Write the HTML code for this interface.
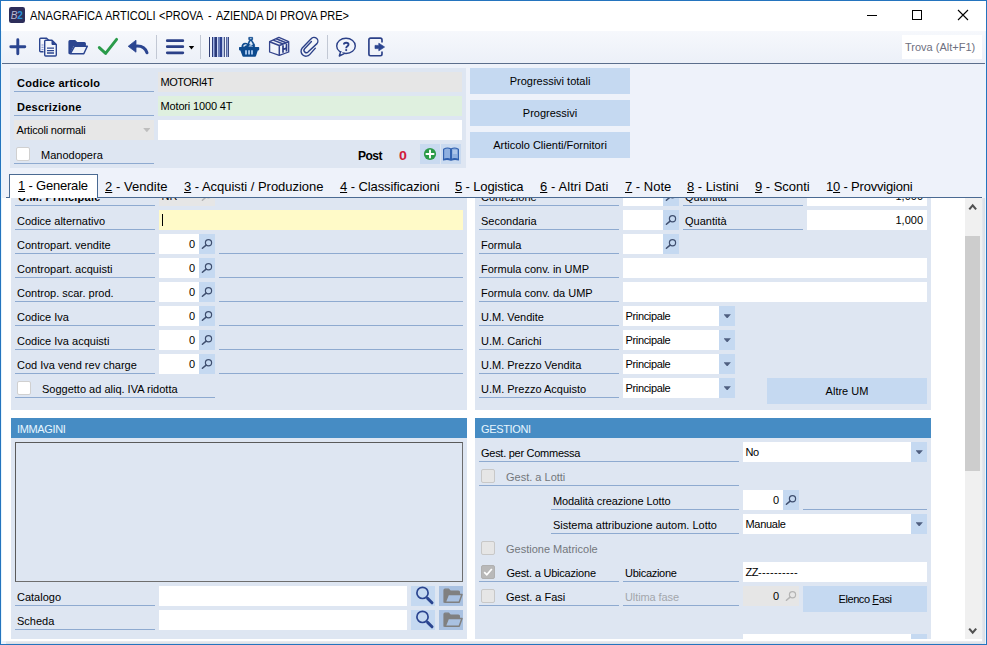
<!DOCTYPE html>
<html>
<head>
<meta charset="utf-8">
<title>ANAGRAFICA ARTICOLI</title>
<style>
*{box-sizing:border-box;margin:0;padding:0}
html,body{width:987px;height:645px;overflow:hidden;background:#fff}
body{font-family:"Liberation Sans",sans-serif;font-size:11px;color:#000;position:relative}
.a{position:absolute}
#win{position:absolute;left:0;top:0;width:987px;height:645px;background:#EEF2FA;overflow:hidden}
.wb{position:absolute;background:#2474BE;z-index:50}
#title{position:absolute;left:0;top:0;width:987px;height:31px;background:#fff}
#title .t{position:absolute;left:0;top:9px;font-size:12px;line-height:14px;white-space:nowrap;color:#000}
#title .t span{position:absolute;top:0;transform-origin:0 0;white-space:nowrap}
#tb{position:absolute;left:0;top:31px;width:987px;height:32px;background:linear-gradient(#F6F8FC,#ECF0F8)}
#tbl{position:absolute;left:0;top:63px;width:987px;height:1px;background:#5B6E8C}
.lbl{position:absolute;height:20px;line-height:22px;white-space:nowrap;padding-left:2px;border-bottom:1px solid #8EAAD0}
.lbl.b{font-weight:bold;letter-spacing:0.25px;padding-left:3px}
.fld{position:absolute;height:20px;line-height:20px;background:#fff;white-space:nowrap;padding:0 3px 0 2.5px}
.num{text-align:right;padding-right:4px}
.ln{position:absolute;height:1px;background:#8EAAD0}
.btn{position:absolute;background:#C5D9F1;text-align:center;white-space:nowrap}
.pan{position:absolute;background:#DEE6F2}
.hdr{position:absolute;height:20px;line-height:22px;background:#468CC4;color:#E6F6FF;padding-left:6px;letter-spacing:-0.35px}
.sb{position:absolute;width:16px;height:20px;background:#C5D9F1}
.cb{position:absolute;width:14px;height:14px;background:#fff;border:1px solid #D0D0D0;border-radius:2px}
.cb.d{background:#E6E6E6;border-color:#C8C8C8}
.dd{position:absolute;width:16px;height:20px;background:#C5D9F1}
.dd:after{content:"";position:absolute;left:4.5px;top:8.2px;width:7.4px;height:4.2px;background:#4F5F80;clip-path:polygon(0 0,100% 0,50% 100%)}
.cmb{letter-spacing:-0.35px}
.gray{color:#73777C}
.mg{position:absolute;left:0;top:0;width:16px;height:20px}
.tab{position:absolute;top:175px;height:24px;line-height:24px;font-size:13px;white-space:nowrap}
.tab u{text-decoration:underline}
</style>
</head>
<body>
<div id="win">
<svg width="0" height="0" style="position:absolute"><defs>
<g id="mg"><circle cx="9.5" cy="8.7" r="3.1" fill="none" stroke="#3F4F6F" stroke-width="1.2"/><path d="M7.1 11.1 L3.4 14.3" stroke="#3F4F6F" stroke-width="1.5" stroke-linecap="round"/></g>
<g id="mgg"><circle cx="9.5" cy="8.7" r="3.1" fill="none" stroke="#B4B4B4" stroke-width="1.2"/><path d="M7.1 11.1 L3.4 14.3" stroke="#B4B4B4" stroke-width="1.5" stroke-linecap="round"/></g>
<g id="bigmg"><circle cx="11.5" cy="6.9" r="5.6" fill="none" stroke="#2B4590" stroke-width="1.7"/><path d="M16.6 12.4 L21 16.8" stroke="#2B4590" stroke-width="3" stroke-linecap="round"/></g>
<g id="gfold"><path d="M5 16.2 V4.2 Q5 3.2 6 3.2 H9.6 L11.2 5 H19.4 Q20.4 5 20.4 6 V9 H9 L6 16.2 Z" fill="#808080" stroke="#808080" stroke-width="1.2" stroke-linejoin="round"/><path d="M6.2 16.2 L9.2 8.6 H23 L20.2 16.2 Z" fill="#A9C1E1" stroke="#808080" stroke-width="1.5" stroke-linejoin="round"/></g>
</defs></svg>
<div class="wb" style="left:0;top:0;width:987px;height:1px"></div><div class="wb" style="left:0;top:644px;width:987px;height:1px"></div><div class="wb" style="left:0;top:0;width:1px;height:645px"></div><div class="wb" style="left:986px;top:0;width:1px;height:645px"></div>
<div id="title"><div class="t"><span style="left:29.8px;transform:scaleX(0.93)">ANAGRAFICA</span><span style="left:104.8px;transform:scaleX(0.915)">ARTICOLI</span><span style="left:159.2px;transform:scaleX(0.915)">&lt;PROVA</span><span style="left:208.2px;transform:scaleX(0.915)">-</span><span style="left:215.5px;transform:scaleX(0.915)">AZIENDA</span><span style="left:266.1px;transform:scaleX(0.915)">DI</span><span style="left:280.0px;transform:scaleX(0.915)">PROVA</span><span style="left:319.9px;transform:scaleX(0.915)">PRE&gt;</span></div></div>
<div id="tb"></div>
<div id="tbl"></div>
<!--TOOLBAR-->
<svg class="a" style="left:0;top:0" width="987" height="64" viewBox="0 0 987 64">
<!-- title icon -->
<rect x="9" y="7" width="16" height="16" rx="2.2" fill="#2D2E5A"/>
<text x="10.8" y="18.7" font-family="Liberation Sans" font-size="10" font-style="italic" fill="#B9B9D2">B</text>
<text x="17.2" y="18.7" font-family="Liberation Sans" font-size="10" font-weight="bold" fill="#2A93D8">2</text>
<!-- window controls -->
<path d="M867 15.5 H877" stroke="#000" stroke-width="1"/>
<rect x="912.5" y="10.5" width="9" height="9" fill="none" stroke="#000" stroke-width="1"/>
<path d="M958 10 L968 20 M968 10 L958 20" stroke="#000" stroke-width="1.1"/>
<!-- plus -->
<path d="M10.8 46.7 H24.8 M17.8 39.7 V53.7" stroke="#2B4590" stroke-width="2.9" stroke-linecap="round"/>
<!-- copy -->
<path d="M43.5 51.8 H40.7 Q39.7 51.8 39.7 50.8 V39.2 Q39.7 38.2 40.7 38.2 H46.5 L49.8 41.2" fill="none" stroke="#2B4590" stroke-width="1.4"/>
<path d="M44.7 41.2 Q44.7 40.2 45.7 40.2 H52 L56.3 44.5 V55 Q56.3 56 55.3 56 H45.7 Q44.7 56 44.7 55 Z" fill="#F3F6FB" stroke="#2B4590" stroke-width="1.4" stroke-linejoin="round"/>
<path d="M52 40.4 V44.5 H56" fill="#2B4590" stroke="#2B4590" stroke-width="1"/>
<path d="M47 48.2 H54 M47 50.6 H54 M47 53 H54" stroke="#2B4590" stroke-width="1.3"/>
<path d="M41.5 45 H43.5 M41.5 47.3 H43.5 M41.5 49.6 H43.5" stroke="#7C8FCB" stroke-width="1"/>
<!-- folder -->
<path d="M69 53.3 V41.6 Q69 40.6 70 40.6 H75 L77 42.6 H84.3 Q85.3 42.6 85.3 43.6 V45.6 H73.2 L69.6 53.6 Z" fill="#2B4590" stroke="#2B4590" stroke-width="1.2" stroke-linejoin="round"/>
<path d="M70.4 53.7 L74.6 46.2 H87.3 L83.8 53.7 Z" fill="#EEF2FA" stroke="#2B4590" stroke-width="1.5" stroke-linejoin="round"/>
<!-- check -->
<path d="M99.3 47.6 L105.6 53.4 L116.6 39.4" fill="none" stroke="#2A9B4A" stroke-width="2.9" stroke-linecap="round" stroke-linejoin="round"/>
<!-- undo -->
<path d="M128.2 46.3 L136 40.2 V52.2 Z" fill="#2B4590" stroke="#2B4590" stroke-width="0.8" stroke-linejoin="round"/>
<path d="M135 46.2 Q144.5 45 147 52.8" fill="none" stroke="#2B4590" stroke-width="3" stroke-linecap="round"/>
<!-- sep -->
<path d="M156.5 35 V59 M200.5 35 V59 M327.5 35 V59" stroke="#C2C8D4" stroke-width="1"/>
<!-- hamburger -->
<path d="M167.3 40.7 H182.8 M167.3 46.7 H182.8 M167.3 52.8 H182.8" stroke="#2B4088" stroke-width="2.8" stroke-linecap="round"/>
<path d="M188.8 46 H194.2 L191.5 49.4 Z" fill="#000"/>
<!-- barcode -->
<g shape-rendering="crispEdges">
<rect x="209" y="37" width="1" height="20" fill="#2E3C72"/><rect x="212" y="37" width="1" height="20" fill="#2B3A78"/><rect x="213" y="37" width="1" height="20" fill="#A0B4E8"/><rect x="214" y="37" width="1" height="20" fill="#6070A8"/><rect x="215" y="37" width="2" height="20" fill="#2B3A78"/><rect x="217" y="37" width="1" height="20" fill="#D0DCF8"/><rect x="218" y="37" width="2" height="20" fill="#6A7DB8"/><rect x="220" y="37" width="2" height="20" fill="#2B4090"/><rect x="222" y="37" width="2" height="20" fill="#B8C4E4"/><rect x="224" y="37" width="1" height="20" fill="#4A5888"/><rect x="226" y="37" width="1" height="20" fill="#5A6AA0"/><rect x="227" y="37" width="1" height="20" fill="#98A8D8"/><rect x="228" y="37" width="1" height="20" fill="#3A4880"/>
</g>
<!-- basket -->
<g>
<path d="M247.4 47 V44.6 L249.4 40.4 V39.6 H248.8 V37.4 H252.6 V39.6 H252 V40.4 L254.6 44.8 V47 Z" fill="#0D4A8E" stroke="#0D4A8E" stroke-width="0.8" stroke-linejoin="round"/>
<path d="M249.2 44 L250.2 41.2 H251.2 L253 44.6 Q251 45.4 249.2 44 Z" fill="#DCE8F7"/><path d="M249.8 38.3 H251.6 V39.2 H249.8 Z" fill="#DCE8F7"/>
<path d="M241.4 47.2 Q241.6 43 245.2 42.8 Q248.8 43 249 47.2 Z" fill="#0D4A8E"/>
<path d="M243 46.4 Q243.4 44.4 245.4 44.2 Q246.6 44.2 247.2 45 Q245.4 45.2 244.6 46.4 Z" fill="#DCE8F7"/>
<path d="M248.4 46.6 Q249.8 44.8 251.6 45.6 Q252.8 46 253.2 46.6 Z" fill="#DCE8F7"/>
<path d="M239.6 47.1 H258.6 Q259.2 47.1 259.2 47.8 V49.6 Q259.2 50.4 258.4 50.4 H257.8 L256 56 Q255.8 56.8 255 56.8 H243.4 Q242.6 56.8 242.4 56 L240.4 50.4 H239.8 Q239 50.4 239 49.6 V47.8 Q239 47.1 239.6 47.1 Z" fill="#0D4A8E"/>
<path d="M246 50.2 V54.6 M249.05 50.2 V54.6 M252 50.2 V54.6" stroke="#B8D4F8" stroke-width="1.7"/>
</g>
<!-- box -->
<g fill="none" stroke="#34448C" stroke-width="1.3" stroke-linejoin="round">
<path d="M269.6 41.7 L278.9 37.4 L288.7 41.7 V52 L279.3 55.4 L269.6 52 Z"/>
<path d="M269.6 41.7 L279.3 45.5 L288.7 41.7 M279.3 45.5 V55.4" stroke-width="1.5"/>
<path d="M273.2 40.1 L283.2 44 M276.2 38.7 L286 42.8" stroke-width="1.5"/>
<path d="M283 45.2 V52.8 M286.5 43.8 V51.4 M283 49.5 L286.5 48.1" stroke="#2B3C86" stroke-width="1.7"/>
</g>
<!-- paperclip -->
<path transform="matrix(0.643 -0.766 0.766 0.643 310 46)" d="M4.4 -1.8 L-5.6 -2.4 A2.4 2.4 0 0 0 -5.6 2.4 L6.3 3.8 A3.8 3.8 0 0 0 6.3 -3.8 L-6.5 -4.7 A5 5 0 0 0 -6.5 5.3 L1.8 5.5" fill="none" stroke="#2B4088" stroke-width="1.4" stroke-linecap="round" stroke-linejoin="round"/>
<!-- help -->
<ellipse cx="346" cy="45.9" rx="9.3" ry="7.6" fill="none" stroke="#2B4088" stroke-width="1.4"/>
<path d="M340.6 51.6 L339.3 56 L344.2 53.6" fill="#EEF2F9" stroke="#2B4088" stroke-width="1.4" stroke-linejoin="round" stroke-linecap="round"/>
<path d="M343.9 44.5 Q343.9 42.7 346.2 42.7 Q348.5 42.7 348.5 44.5 Q348.5 45.6 347.3 46.3 Q346.2 47 346.2 48.2" fill="none" stroke="#2B4088" stroke-width="1.9" stroke-linecap="butt"/>
<circle cx="346.2" cy="50.1" r="1.05" fill="#2B4088"/>
<!-- exit -->
<path d="M382 42.4 V39.8 Q382 38.1 380.3 38.1 H370.6 Q368.9 38.1 368.9 39.8 V54 Q368.9 55.7 370.6 55.7 H380.3 Q382 55.7 382 54 V51.4" fill="none" stroke="#2B4088" stroke-width="1.65" stroke-linejoin="round"/>
<path d="M375 45.4 H378.8 V43.2 L384.6 47 L378.8 50.8 V48.6 H375 Z" fill="#2B4590" stroke="#2B4590" stroke-width="0.7" stroke-linejoin="round"/>
</svg>
<div class="a" style="left:902px;top:35px;width:80px;height:24px;background:#fff;color:#6E7080;line-height:24px;padding-left:3px;white-space:nowrap">Trova (Alt+F1)</div>
<!--HEADER-->
<div class="pan" style="left:10px;top:68px;width:456px;height:100px"></div>
<div class="lbl b" style="left:14px;top:72px;width:140px">Codice articolo</div>
<div class="fld" style="left:158px;top:72px;width:304px;background:#E6E6E6;letter-spacing:-0.5px">MOTORI4T</div>
<div class="lbl b" style="left:14px;top:96px;width:140px">Descrizione</div>
<div class="fld" style="left:158px;top:96px;width:304px;background:#DFF0DF;letter-spacing:-0.15px">Motori 1000 4T</div>
<div class="fld" style="left:14px;top:120px;width:140px;background:#E7E7E7;letter-spacing:-0.2px">Articoli normali</div>
<div class="a" style="left:143.2px;top:127.9px;width:7.3px;height:4.3px;background:#BEBEBE;clip-path:polygon(0 0,100% 0,50% 100%)"></div>
<div class="fld" style="left:158px;top:120px;width:304px"></div>
<div class="cb" style="left:16px;top:147px"></div>
<div class="lbl" style="left:14px;top:144px;width:140px;padding-left:27px">Manodopera</div>
<div class="a" style="left:358px;top:149px;font-weight:bold;font-size:12px;line-height:14px;letter-spacing:-0.5px">Post</div>
<div class="a" style="left:399px;top:149px;font-weight:bold;font-size:12px;line-height:14px;color:#D01A3C;transform:scaleX(1.18);transform-origin:0 0">0</div>
<div class="a" style="left:420px;top:144px;width:20px;height:20px;background:#C9DAF0"></div>
<div class="a" style="left:441px;top:144px;width:20px;height:20px;background:#C9DAF0"></div>
<svg class="a" style="left:420px;top:144px" width="42" height="20" viewBox="420 144 42 20">
<circle cx="430" cy="154" r="6.1" fill="#2A9A48"/>
<path d="M426.4 154 H433.6 M430 150.4 V157.6" stroke="#fff" stroke-width="1.9" stroke-linecap="round"/>
<path d="M443.6 149.2 Q447.4 147 450.6 148.8 V159.4 Q447.4 157.8 443.6 159.6 Z M458.4 149.2 Q454.6 147 451.4 148.8 V159.4 Q454.6 157.8 458.4 159.6 Z" fill="#8FB0E0" stroke="#2F5FAE" stroke-width="1.1" stroke-linejoin="round"/>
<path d="M443 160 Q447.4 158.6 451 160.2 Q454.6 158.6 459 160" fill="none" stroke="#2F5FAE" stroke-width="1.2"/>
<path d="M452.8 151 H457 M452.8 153 H457" stroke="#D4E2F5" stroke-width="0.9"/>
</svg>
<div class="btn" style="left:470px;top:68px;width:160px;height:26px;line-height:27px">Progressivi totali</div>
<div class="btn" style="left:470px;top:100px;width:160px;height:26px;line-height:27px">Progressivi</div>
<div class="btn" style="left:470px;top:132px;width:160px;height:26px;line-height:27px">Articolo Clienti/Fornitori</div>
<!--TABS-->
<div class="a" style="left:1px;top:198px;width:981px;height:443px;background:#fff"></div>
<div class="a" style="left:6px;top:197px;width:976px;height:1px;background:#4A6A92"></div>
<div class="a" style="left:982px;top:198px;width:3px;height:446px;background:linear-gradient(90deg,#E6E9EE,#D8DCE4)"></div><div class="a" style="left:985px;top:31px;width:1px;height:613px;background:#EAF5FD;z-index:40"></div><div class="a" style="left:1px;top:31px;width:1px;height:613px;background:#E6F5FD;z-index:40"></div>
<div class="a" style="left:6px;top:641px;width:976px;height:3px;background:linear-gradient(#ECEEF2,#D8DCE4)"></div>
<div class="a" style="left:9px;top:174px;width:89px;height:24px;background:#fff;border:1px solid #4A6A92;border-bottom:0"></div>
<div class="tab" style="top:174px;left:18px;letter-spacing:-0.2px"><u>1</u> - Generale</div>
<div class="tab" style="left:105px;letter-spacing:0.04px"><u>2</u> - Vendite</div>
<div class="tab" style="left:184px;letter-spacing:-0.03px"><u>3</u> - Acquisti / Produzione</div>
<div class="tab" style="left:340px;letter-spacing:-0.09px"><u>4</u> - Classificazioni</div>
<div class="tab" style="left:455px;letter-spacing:-0.13px"><u>5</u> - Logistica</div>
<div class="tab" style="left:540px;letter-spacing:0.09px"><u>6</u> - Altri Dati</div>
<div class="tab" style="left:625px;letter-spacing:0px"><u>7</u> - Note</div>
<div class="tab" style="left:687px;letter-spacing:-0.04px"><u>8</u> - Listini</div>
<div class="tab" style="left:755px;letter-spacing:-0.02px"><u>9</u> - Sconti</div>
<div class="tab" style="left:826px;letter-spacing:-0.19px">1<u>0</u> - Provvigioni</div>
<!--PAGE-->
<div id="pg" class="a" style="left:0;top:0;width:987px;height:645px;clip-path:inset(198px 23px 6px 7px)">
<div class="pan" style="left:11px;top:180px;width:456px;height:230px"></div>
<div class="lbl b" style="left:15px;top:186px;width:140px">U.M. Principale</div>
<div class="fld" style="left:159px;top:186px;width:56px;background:#E6E6E6">NR</div>
<div class="sb" style="left:199px;top:186px;background:#E6E6E6"><svg class="mg" viewBox="0 0 16 20"><use href="#mgg"/></svg></div>
<div class="lbl" style="left:15px;top:210px;width:140px">Codice alternativo</div>
<div class="fld" style="left:159px;top:210px;width:304px;background:#FFFAC8"></div>
<div class="a" style="left:162px;top:214px;width:1px;height:12px;background:#000"></div>
<div class="lbl" style="left:15px;top:234px;width:140px">Contropart. vendite</div>
<div class="fld num" style="left:159px;top:234px;width:40px">0</div>
<div class="sb" style="left:199px;top:234px"><svg class="mg" viewBox="0 0 16 20"><use href="#mg"/></svg></div>
<div class="ln" style="left:219px;top:253px;width:244px"></div>
<div class="lbl" style="left:15px;top:258px;width:140px">Contropart. acquisti</div>
<div class="fld num" style="left:159px;top:258px;width:40px">0</div>
<div class="sb" style="left:199px;top:258px"><svg class="mg" viewBox="0 0 16 20"><use href="#mg"/></svg></div>
<div class="ln" style="left:219px;top:277px;width:244px"></div>
<div class="lbl" style="left:15px;top:282px;width:140px">Controp. scar. prod.</div>
<div class="fld num" style="left:159px;top:282px;width:40px">0</div>
<div class="sb" style="left:199px;top:282px"><svg class="mg" viewBox="0 0 16 20"><use href="#mg"/></svg></div>
<div class="ln" style="left:219px;top:301px;width:244px"></div>
<div class="lbl" style="left:15px;top:306px;width:140px">Codice Iva</div>
<div class="fld num" style="left:159px;top:306px;width:40px">0</div>
<div class="sb" style="left:199px;top:306px"><svg class="mg" viewBox="0 0 16 20"><use href="#mg"/></svg></div>
<div class="ln" style="left:219px;top:325px;width:244px"></div>
<div class="lbl" style="left:15px;top:330px;width:140px">Codice Iva acquisti</div>
<div class="fld num" style="left:159px;top:330px;width:40px">0</div>
<div class="sb" style="left:199px;top:330px"><svg class="mg" viewBox="0 0 16 20"><use href="#mg"/></svg></div>
<div class="ln" style="left:219px;top:349px;width:244px"></div>
<div class="lbl" style="left:15px;top:354px;width:140px">Cod Iva vend rev charge</div>
<div class="fld num" style="left:159px;top:354px;width:40px">0</div>
<div class="sb" style="left:199px;top:354px"><svg class="mg" viewBox="0 0 16 20"><use href="#mg"/></svg></div>
<div class="ln" style="left:219px;top:373px;width:244px"></div>
<div class="cb" style="left:17px;top:381px"></div>
<div class="lbl" style="left:15px;top:378px;width:200px;padding-left:27px">Soggetto ad aliq. IVA ridotta</div>
<div class="pan" style="left:475px;top:180px;width:456px;height:230px"></div>
<div class="lbl" style="left:479px;top:186px;width:140px">Confezione</div>
<div class="fld" style="left:623px;top:186px;width:40px"></div>
<div class="sb" style="left:663px;top:186px"><svg class="mg" viewBox="0 0 16 20"><use href="#mg"/></svg></div>
<div class="lbl" style="left:683px;top:186px;width:120px">Quantità</div>
<div class="fld num" style="left:807px;top:186px;width:120px">1,000</div>
<div class="lbl" style="left:479px;top:210px;width:140px">Secondaria</div>
<div class="fld" style="left:623px;top:210px;width:40px"></div>
<div class="sb" style="left:663px;top:210px"><svg class="mg" viewBox="0 0 16 20"><use href="#mg"/></svg></div>
<div class="lbl" style="left:683px;top:210px;width:120px">Quantità</div>
<div class="fld num" style="left:807px;top:210px;width:120px">1,000</div>
<div class="lbl" style="left:479px;top:234px;width:140px">Formula</div>
<div class="fld" style="left:623px;top:234px;width:40px"></div>
<div class="sb" style="left:663px;top:234px"><svg class="mg" viewBox="0 0 16 20"><use href="#mg"/></svg></div>
<div class="lbl" style="left:479px;top:258px;width:140px">Formula conv. in UMP</div>
<div class="fld" style="left:623px;top:258px;width:304px"></div>
<div class="lbl" style="left:479px;top:282px;width:140px">Formula conv. da UMP</div>
<div class="fld" style="left:623px;top:282px;width:304px"></div>
<div class="lbl" style="left:479px;top:306px;width:140px">U.M. Vendite</div>
<div class="fld" style="left:623px;top:306px;width:96px"><span class="cmb">Principale</span></div>
<div class="dd" style="left:719px;top:306px"></div>
<div class="lbl" style="left:479px;top:330px;width:140px">U.M. Carichi</div>
<div class="fld" style="left:623px;top:330px;width:96px"><span class="cmb">Principale</span></div>
<div class="dd" style="left:719px;top:330px"></div>
<div class="lbl" style="left:479px;top:354px;width:140px">U.M. Prezzo Vendita</div>
<div class="fld" style="left:623px;top:354px;width:96px"><span class="cmb">Principale</span></div>
<div class="dd" style="left:719px;top:354px"></div>
<div class="lbl" style="left:479px;top:378px;width:140px">U.M. Prezzo Acquisto</div>
<div class="fld" style="left:623px;top:378px;width:96px"><span class="cmb">Principale</span></div>
<div class="dd" style="left:719px;top:378px"></div>
<div class="btn" style="left:767px;top:378px;width:160px;height:26px;line-height:27px">Altre UM</div>
<div class="pan" style="left:11px;top:418px;width:456px;height:230px"></div>
<div class="hdr" style="left:11px;top:418px;width:456px">IMMAGINI</div>
<div class="a" style="left:15px;top:442px;width:448px;height:140px;border:1px solid #5A5A5A;border-right-color:#6E6E6E;border-bottom-color:#6E6E6E"></div>
<div class="lbl" style="left:15px;top:586px;width:140px">Catalogo</div>
<div class="fld" style="left:159px;top:586px;width:248px"></div>
<div class="a" style="left:411px;top:586px;width:24px;height:20px;background:#C5D9F1"><svg class="a" style="left:0;top:0" width="24" height="20" viewBox="0 0 24 20"><use href="#bigmg"/></svg></div>
<div class="a" style="left:439px;top:586px;width:24px;height:20px;background:#A9C1E1"><svg class="a" style="left:0;top:0" width="24" height="20" viewBox="0 0 24 20"><use href="#gfold"/></svg></div>
<div class="lbl" style="left:15px;top:610px;width:140px">Scheda</div>
<div class="fld" style="left:159px;top:610px;width:248px"></div>
<div class="a" style="left:411px;top:610px;width:24px;height:20px;background:#C5D9F1"><svg class="a" style="left:0;top:0" width="24" height="20" viewBox="0 0 24 20"><use href="#bigmg"/></svg></div>
<div class="a" style="left:439px;top:610px;width:24px;height:20px;background:#A9C1E1"><svg class="a" style="left:0;top:0" width="24" height="20" viewBox="0 0 24 20"><use href="#gfold"/></svg></div>
<div class="pan" style="left:475px;top:418px;width:456px;height:230px"></div>
<div class="hdr" style="left:475px;top:418px;width:456px">GESTIONI</div>
<div class="lbl" style="left:479px;top:442px;width:260px;letter-spacing:-0.27px">Gest. per Commessa</div>
<div class="fld" style="left:743px;top:442px;width:168px"><span style="letter-spacing:-0.5px">No</span></div>
<div class="dd" style="left:911px;top:442px"></div>
<div class="cb d" style="left:481px;top:469px"></div>
<div class="lbl gray" style="left:479px;top:466px;width:260px;padding-left:27px">Gest. a Lotti</div>
<div class="lbl" style="left:551px;top:490px;width:188px;letter-spacing:-0.1px">Modalità creazione Lotto</div>
<div class="fld num" style="left:743px;top:490px;width:40px">0</div>
<div class="sb" style="left:783px;top:490px"><svg class="mg" viewBox="0 0 16 20"><use href="#mg"/></svg></div>
<div class="ln" style="left:803px;top:509px;width:124px"></div>
<div class="lbl" style="left:551px;top:514px;width:188px">Sistema attribuzione autom. Lotto</div>
<div class="fld" style="left:743px;top:514px;width:168px"><span style="letter-spacing:-0.3px">Manuale</span></div>
<div class="dd" style="left:911px;top:514px"></div>
<div class="cb d" style="left:481px;top:541px"></div>
<div class="lbl gray" style="left:479px;top:538px;width:260px;padding-left:27px;border-bottom-color:transparent">Gestione Matricole</div>
<div class="cb d" style="left:481px;top:565px;background:#B9B9B9;border-color:#B0B0B0"><svg class="a" style="left:0;top:0" width="12" height="12" viewBox="0 0 12 12"><path d="M2.2 6.2 L4.8 8.8 L9.8 3" stroke="#fff" stroke-width="1.8" fill="none"/></svg></div>
<div class="lbl" style="left:479px;top:562px;width:140px;padding-left:27.5px;letter-spacing:-0.2px">Gest. a Ubicazione</div>
<div class="lbl" style="left:623px;top:562px;width:116px;letter-spacing:-0.28px">Ubicazione</div>
<div class="fld" style="left:743px;top:562px;width:184px"><span style="letter-spacing:-0.5px">ZZ</span><span style="letter-spacing:0.35px">----------</span></div>
<div class="cb d" style="left:481px;top:589px"></div>
<div class="lbl" style="left:479px;top:586px;width:140px;padding-left:27px">Gest. a Fasi</div>
<div class="lbl" style="left:623px;top:586px;width:116px;color:#A3A7AC;letter-spacing:-0.1px">Ultima fase</div>
<div class="fld num" style="left:743px;top:586px;width:40px;background:#E6E6E6">0</div>
<div class="sb" style="left:783px;top:586px;background:#E6E6E6"><svg class="mg" viewBox="0 0 16 20"><use href="#mgg"/></svg></div>
<div class="btn" style="left:803px;top:586px;width:124px;height:26px;line-height:27px;letter-spacing:-0.4px">Elenco <u>F</u>asi</div>
<div class="fld" style="left:743px;top:634px;width:168px"></div>
<div class="dd" style="left:911px;top:634px"></div>
</div>
<div class="a" style="left:965px;top:198px;width:16.5px;height:441px;background:#F0F0F0"></div>
<div class="a" style="left:965px;top:236px;width:15px;height:235px;background:#CDCDCD"></div>
<svg class="a" style="left:965px;top:198px" width="16" height="17" viewBox="0 0 16 17"><path d="M4.3 11.4 L7.7 7.4 L11.1 11.4" stroke="#505050" stroke-width="2.1" fill="none"/></svg>
<svg class="a" style="left:965px;top:622px" width="16" height="17" viewBox="0 0 16 17"><path d="M4.2 6.6 L7.7 10.6 L11.2 6.6" stroke="#505050" stroke-width="2.1" fill="none"/></svg>
</div>
</body>
</html>
